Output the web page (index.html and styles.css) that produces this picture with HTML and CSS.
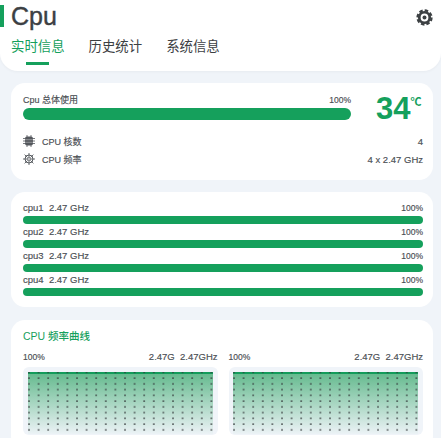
FILE: index.html
```html
<!DOCTYPE html>
<html lang="en">
<head>
<meta charset="UTF-8" />
<meta name="viewport" content="width=device-width, initial-scale=1.0" />
<title>Cpu</title>
<link rel="stylesheet" href="styles.css">
</head>
<body>
<header class="top">
    <div class="title-row">
        <span class="title-mark"></span>
        <h1>Cpu</h1>
        <svg class="gear" viewBox="0 0 24 24" fill="none" stroke="#3c4043">
            <circle cx="12" cy="12" r="10" stroke-width="3" stroke-dasharray="5 2.850"/>
            <circle cx="12" cy="12" r="7.400" stroke-width="3.800"/>
            <circle cx="12" cy="12" r="2.800" fill="#3c4043" stroke="none"/>
        </svg>
    </div>
    <nav class="tabs">
        <span class="tab active">实时信息</span>
        <span class="tab">历史统计</span>
        <span class="tab">系统信息</span>
    </nav>
</header>

<section class="card summary">
    <div class="usage">
        <div class="usage-main">
            <div class="row-label"><span class="small">Cpu 总体使用</span><span class="pct">100%</span></div>
            <div class="bar big"></div>
        </div>
        <div class="temp">34<sup>℃</sup></div>
    </div>
    <div class="info-row">
        <svg class="chip" viewBox="0 0 12 12">
            <rect x="2" y="1.500" width="8" height="9" rx="2" fill="#55595e"/>
            <path stroke="#55595e" stroke-width=".8" d="M0 3.500h12M0 6h12M0 8.500h12M4 0v12M8 0v12"/>
            <path stroke="#ffffff" stroke-width=".35" d="M2 4.700h8M2 7.300h8"/>
        </svg>
        <span class="info-name">CPU 核数</span>
        <span class="info-value">4</span>
    </div>
    <div class="info-row">
        <svg class="chip" viewBox="0 0 12 12" fill="none" stroke="#55595e">
            <circle cx="6" cy="6" r="4" stroke-width="1"/>
            <circle cx="6" cy="6" r="1.400" stroke-width=".8"/>
            <path stroke-width=".9" d="M6 0v4.500M6 7.500v4.500M0 6h4.500M7.500 6h4.500M1.600 1.600l3 3M7.400 7.400l3 3M10.400 1.600l-3 3M4.600 7.400l-3 3"/>
        </svg>
        <span class="info-name">CPU 频率</span>
        <span class="info-value">4 x 2.47 GHz</span>
    </div>
</section>

<section class="card cores">
    <div class="core">
        <div class="row-label"><span>cpu1&nbsp; 2.47 GHz</span><span class="pct">100%</span></div>
        <div class="bar"></div>
    </div>
    <div class="core">
        <div class="row-label"><span>cpu2&nbsp; 2.47 GHz</span><span class="pct">100%</span></div>
        <div class="bar"></div>
    </div>
    <div class="core">
        <div class="row-label"><span>cpu3&nbsp; 2.47 GHz</span><span class="pct">100%</span></div>
        <div class="bar"></div>
    </div>
    <div class="core">
        <div class="row-label"><span>cpu4&nbsp; 2.47 GHz</span><span class="pct">100%</span></div>
        <div class="bar"></div>
    </div>
</section>

<section class="card curves">
    <h3>CPU 频率曲线</h3>
    <div class="charts">
        <div class="chart-box">
            <div class="row-label"><span class="pct">100%</span><span>2.47G&nbsp; 2.47GHz</span></div>
            <div class="chart">
                <svg class="plot" viewBox="0 0 185 62">
                    <defs>
                        <linearGradient id="fade" x1="0" y1="0" x2="0" y2="1">
                            <stop offset="0" stop-color="#62b98c"/>
                            <stop offset="1" stop-color="#62b98c" stop-opacity="0.03"/>
                        </linearGradient>
                        <pattern id="dots" y="-0.7" width="9.6" height="5.75" patternUnits="userSpaceOnUse">
                            <circle cx="1" cy="1" r="0.85" fill="#33373a"/>
                        </pattern>
                    </defs>
                    <rect width="185" height="62" fill="url(#fade)"/>
                    <rect width="185" height="2" fill="#149c5b"/>
                    <rect width="185" height="62" fill="url(#dots)"/>
                </svg>
            </div>
        </div>
        <div class="chart-box">
            <div class="row-label"><span class="pct">100%</span><span>2.47G&nbsp; 2.47GHz</span></div>
            <div class="chart">
                <svg class="plot" viewBox="0 0 185 62">
                    <rect width="185" height="62" fill="url(#fade)"/>
                    <rect width="185" height="2" fill="#149c5b"/>
                    <rect width="185" height="62" fill="url(#dots)"/>
                </svg>
            </div>
        </div>
    </div>
</section>
</body>
</html>
```

FILE: styles.css
```css
:root {
--bg: #f0f4f9;
--green: #15a05c;
--text: #3c4043;
--muted: #4a4e53;
}

html, body {
height: 438px;
overflow: hidden;
}

body {
margin: 0;
font-family: "Liberation Sans", "Noto Sans CJK SC", sans-serif;
background-color: var(--bg);
color: var(--text);
}

.top {
height: 71px;
box-sizing: border-box;
background: white;
border-radius: 0 0 18px 18px;
box-shadow: 0 1px 3px rgba(0,0,0,0.04);
}

.title-row {
display: flex;
align-items: center;
height: 36px;
}

.title-mark {
width: 4px;
height: 22px;
margin-top: -4px;
background: var(--green);
}

h1 {
flex: 1;
margin: -4px 0 0 7px;
font-size: 25px;
font-weight: 400;
line-height: 30px;
-webkit-text-stroke: 0.4px var(--text);
}

.gear {
width: 17px;
height: 17px;
margin: -2px 8px 0 0;
}

.tabs {
display: flex;
gap: 24px;
padding-left: 11px;
}

.tab {
position: relative;
font-size: 13.4px;
line-height: 22px;
color: var(--text);
}

.tab.active {
color: var(--green);
}

.tab.active::after {
content: "";
position: absolute;
left: 15px;
top: 26px;
width: 23px;
height: 3px;
background: var(--green);
}

.card {
margin: 12px 8px 0 11px;
padding: 0 10px 0 12px;
background: white;
border-radius: 14px;
}

.row-label {
display: flex;
justify-content: space-between;
font-size: 9.5px;
line-height: 12px;
color: var(--muted);
-webkit-text-stroke: 0.15px var(--muted);
}

.row-label .small {
font-size: 9px;
}

.pct {
font-size: 8.5px;
}

.bar {
height: 8px;
margin-top: 2px;
border-radius: 4px;
background: var(--green);
}

.bar.big {
height: 12px;
border-radius: 6px;
}

.summary {
height: 97px;
padding-top: 11px;
box-sizing: border-box;
}

.usage {
display: flex;
align-items: flex-start;
}

.usage-main {
flex: none;
width: 328px;
}

.temp {
margin: -3px 0 0 25px;
font-size: 31px;
font-weight: 700;
line-height: 36px;
color: var(--green);
white-space: nowrap;
}

.temp sup {
font-size: 11px;
font-weight: 700;
line-height: 0;
vertical-align: 13px;
}

.info-row {
display: flex;
align-items: center;
height: 18px;
font-size: 9px;
color: var(--muted);
-webkit-text-stroke: 0.15px var(--muted);
}

.usage + .info-row {
margin-top: 5px;
}

.chip {
width: 12px;
height: 12px;
}

.info-name {
flex: 1;
margin-left: 7px;
}

.info-value {
font-size: 9.5px;
}

.cores {
height: 115px;
padding-top: 10px;
box-sizing: border-box;
}

.core {
height: 24px;
}

.curves {
height: 130px;
margin-top: 13px;
padding-top: 10px;
box-sizing: border-box;
}

h3 {
margin: 0;
font-size: 10.5px;
font-weight: 500;
line-height: 13px;
color: var(--green);
}

.charts {
display: flex;
gap: 11px;
margin-top: 8px;
}

.chart-box {
flex: 1;
}

.chart {
margin-top: 4px;
height: 68px;
padding: 5px 0 0 4.5px;
box-sizing: border-box;
background: var(--bg);
border-radius: 6px;
}

.plot {
display: block;
width: 185px;
height: 62px;
}
```
